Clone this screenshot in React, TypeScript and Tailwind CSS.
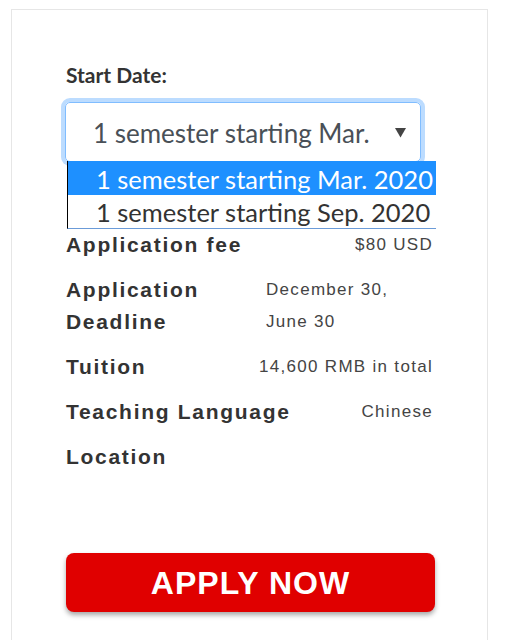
import React from 'react';

const rows = [
  { label: 'Application fee', value: '$80 USD' },
  { label: 'Application\nDeadline', value: 'December 30,\nJune 30', left: true },
  { label: 'Tuition', value: '14,600 RMB in total' },
  { label: 'Teaching Language', value: 'Chinese' },
  { label: 'Location', value: '' },
];

export default function App() {
  return (
    <div className="min-h-[640px] bg-white overflow-hidden">
      <div className="ml-[11px] mt-[9px] w-[477px] h-[700px] border border-[#e6e6e6] px-[54px] pt-[52px]">
        {/* Start date select */}
        <label className="block text-[21px] leading-[26px] font-bold text-[#333] font-['Lato',sans-serif]">
          Start Date:
        </label>
        <div className="relative mt-[14px]">
          <div className="ml-[-1px] w-[356px] h-[60px] rounded-[5px] border border-[#80bdff] ring-4 ring-[#bcdcff] flex items-center pl-[27px] pr-[12px] pt-[2px] font-['Lato',sans-serif] text-[26px] text-[#495057]">
            <span className="flex-1 whitespace-nowrap">1 semester starting Mar.</span>
            <svg width="11" height="10" viewBox="0 0 11 10" className="mr-[2px]">
              <path d="M0 0 L11 0 L5.5 9.5 Z" fill="#444" />
            </svg>
          </div>
          {/* open option list */}
          <div className="absolute left-[1px] top-[59px] w-[369px] bg-white border-l border-l-black border-b border-b-[#6b9bd8] font-['Lato',sans-serif] text-[25.5px] leading-[33px] z-10 overflow-hidden">
            <div className="bg-[#1e90ff] text-white pl-[28px] pt-[2px] h-[34px] flex items-center whitespace-nowrap">1 semester starting Mar. 2020</div>
            <div className="text-[#333] pl-[28px] pt-[2px] h-[33px] flex items-center whitespace-nowrap">1 semester starting Sep. 2020</div>
          </div>
        </div>

        {/* Details */}
        <div className="mt-[67px] font-['Liberation_Sans',Arial,sans-serif]">
          {rows.map((r, i) => (
            <div key={i} className="flex justify-between mb-[13px]">
              <div className="text-[21px] leading-[32px] font-bold tracking-[1.7px] text-[#333] whitespace-pre-line">{r.label}</div>
              <div className={`text-[17px] leading-[32px] tracking-[1.3px] text-[#444] whitespace-pre-line ${r.left ? 'w-[167px] text-left' : 'text-right'}`}>
                {r.value}
              </div>
            </div>
          ))}
        </div>

        <button className="mt-[67px] w-[369px] h-[59px] rounded-[8px] bg-[#e00000] text-white font-bold text-[32px] tracking-[1px] font-['Liberation_Sans',Arial,sans-serif] shadow-[0_3px_5px_rgba(0,0,0,0.35)]">
          APPLY NOW
        </button>
      </div>
    </div>
  );
}
